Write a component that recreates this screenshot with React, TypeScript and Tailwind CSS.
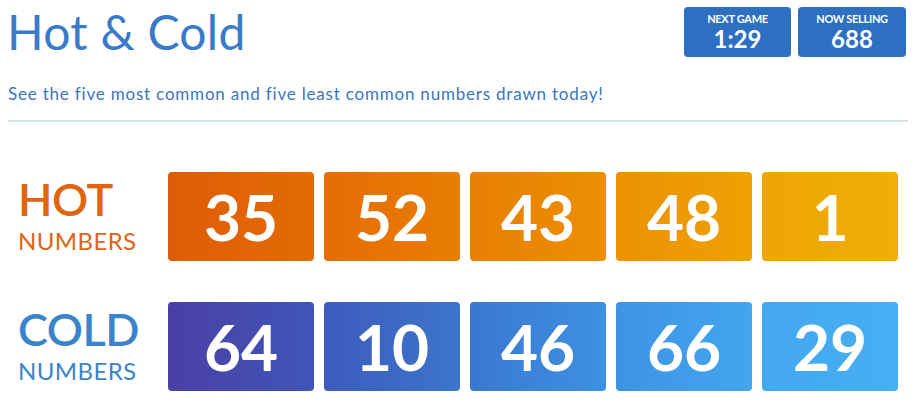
import React from "react";

const hot = [
    { n: 35, bg: "bg-gradient-to-r from-[#df5c08] to-[#e36b03]", w: "w-[146px]" },
    { n: 52, bg: "bg-gradient-to-r from-[#e56c05] to-[#e87e02]", w: "w-[136px]" },
    { n: 43, bg: "bg-gradient-to-r from-[#e97f04] to-[#ec8f03]", w: "w-[136px]" },
    { n: 48, bg: "bg-gradient-to-r from-[#ec9104] to-[#eea104]", w: "w-[136px]" },
    { n: 1, bg: "bg-gradient-to-r from-[#eea504] to-[#f0ae06]", w: "w-[136px]" },
];

const cold = [
    { n: 64, bg: "bg-gradient-to-r from-[#4a3fa5] to-[#3f55b8]", w: "w-[146px]" },
    { n: 10, bg: "bg-gradient-to-r from-[#3e5bbd] to-[#3b75cc]", w: "w-[136px]" },
    { n: 46, bg: "bg-gradient-to-r from-[#3a78d0] to-[#3e91e2]", w: "w-[136px]" },
    { n: 66, bg: "bg-gradient-to-r from-[#3e93e4] to-[#43a6ef]", w: "w-[136px]" },
    { n: 29, bg: "bg-gradient-to-r from-[#44a8f0] to-[#47aff3]", w: "w-[136px]" },
];

const NumberRow = ({
    title,
    color,
    items,
}: {
    title: string;
    color: string;
    items: { n: number; bg: string; w: string }[];
}) => (
    <div className="flex items-center">
        <div className={`w-[160px] pl-[10px] mb-[6px] ${color}`}>
            <p className="text-[45px] leading-[54px] font-semibold tracking-[-0.5px]">{title}</p>
            <p className="text-[24px] leading-[29px] tracking-[0.4px]">NUMBERS</p>
        </div>
        <div className="flex gap-[10px]">
            {items.map((item) => (
                <div
                    key={item.n}
                    className={`${item.w} ${item.bg} h-[89px] rounded-[4px] flex items-center justify-center text-white text-[64px] font-bold`}
                >
                    {item.n}
                </div>
            ))}
        </div>
    </div>
);

const App = () => {
    return (
        <div className="w-[916px] h-[404px] bg-white px-[8px] font-['Lato',sans-serif]">
            <div className="flex justify-between items-start">
                <h1 className="text-[48px] leading-[60px] text-[#3a7bc8] mt-[2px] -ml-[1px] tracking-[0.3px]">
                    Hot &amp; Cold
                </h1>
                <div className="flex gap-[7px] mt-[7px] mr-[2px]">
                    <div className="w-[107px] h-[50px] bg-[#2d6fc1] rounded-[4px] flex flex-col items-center justify-center gap-[1px] text-white font-bold">
                        <span className="text-[11px] leading-[12px] tracking-[-0.3px]">NEXT GAME</span>
                        <span className="text-[24px] leading-[26px]">1:29</span>
                    </div>
                    <div className="w-[108px] h-[50px] bg-[#2d6fc1] rounded-[4px] flex flex-col items-center justify-center gap-[1px] text-white font-bold">
                        <span className="text-[11px] leading-[12px] tracking-[-0.3px]">NOW SELLING</span>
                        <span className="text-[24px] leading-[26px]">688</span>
                    </div>
                </div>
            </div>

            <p className="text-[17px] leading-[20px] text-[#3a76bc] mt-[22px] tracking-[0.8px]">
                See the five most common and five least common numbers drawn today!
            </p>
            <div className="h-[2px] bg-[#d8e2eb] mt-[16px]"></div>

            <div className="mt-[50px] flex flex-col gap-[41px]">
                <NumberRow title="HOT" color="text-[#df6510]" items={hot} />
                <NumberRow title="COLD" color="text-[#3a84cc]" items={cold} />
            </div>
        </div>
    );
};

export default App;
